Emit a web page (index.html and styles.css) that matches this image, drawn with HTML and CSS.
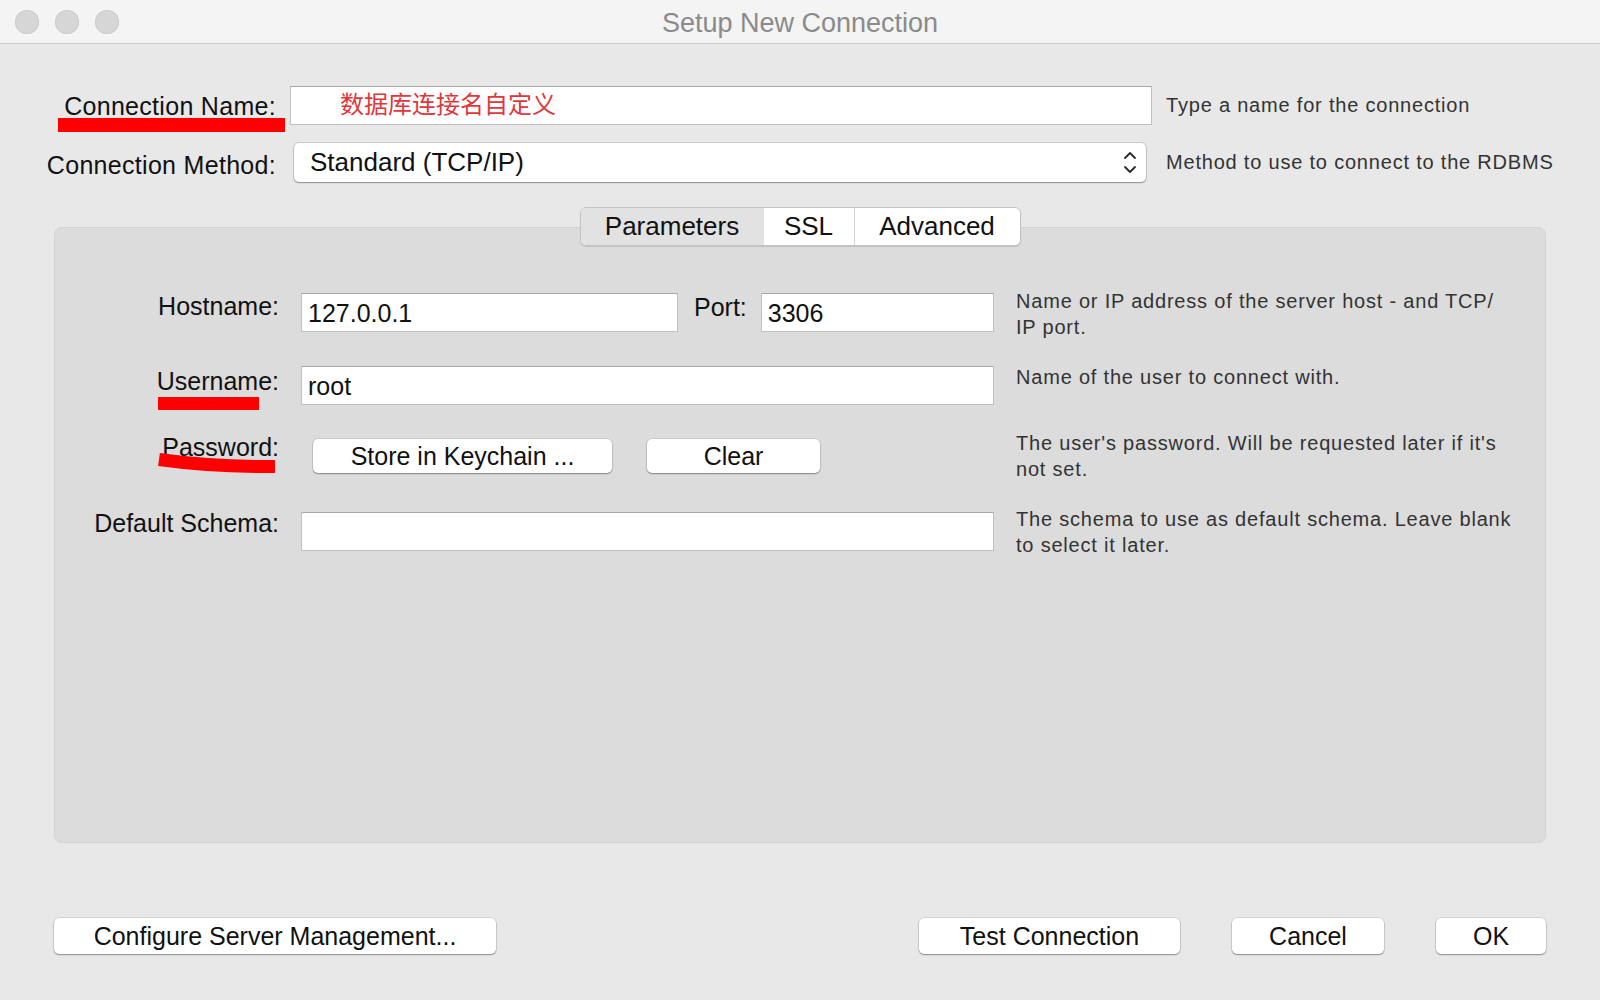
FILE: index.html
```html
<!DOCTYPE html>
<html lang="en">
<head>
<meta charset="utf-8">
<title>Setup New Connection</title>
<link rel="stylesheet" href="styles.css">
</head>
<body>
<div class="window">
  <header class="titlebar">
    <div class="lights"><span class="light"></span><span class="light"></span><span class="light"></span></div>
    <div class="title">Setup New Connection</div>
    <div></div>
  </header>

  <section class="top-form">
    <div class="top-label"><span class="mark-wrap">Connection Name:<span class="mark mark-conn"></span></span></div>
    <div class="input name-input"><span class="cn">数据库连接名自定义</span></div>
    <div class="top-hint">Type a name for the connection</div>

    <div class="top-label method-label">Connection Method:</div>
    <div class="select">
      <span>Standard (TCP/IP)</span>
      <svg class="stepper" width="14" height="25" viewBox="0 0 14 25"><path d="M2 8 L7 3 L12 8 M2 17 L7 22 L12 17" fill="none" stroke="#2a2a2a" stroke-width="1.8" stroke-linecap="round" stroke-linejoin="round"/></svg>
    </div>
    <div class="top-hint">Method to use to connect to the RDBMS</div>
  </section>

  <section class="group">
    <div class="tabs">
      <div class="tab tab-params active">Parameters</div>
      <div class="tab tab-ssl">SSL</div>
      <div class="tab tab-adv">Advanced</div>
    </div>
    <div class="panel">
      <div class="form-grid">
        <div class="f-label">Hostname:</div>
        <div class="host-row">
          <div class="input host-input">127.0.0.1</div>
          <div class="f-label port-label">Port:</div>
          <div class="input port-input">3306</div>
        </div>
        <div class="f-hint">Name or IP address of the server host - and TCP/<br>IP port.</div>

        <div class="f-label user-label"><span class="mark-wrap">Username:<span class="mark mark-user"></span></span></div>
        <div class="input">root</div>
        <div class="f-hint user-hint">Name of the user to connect with.</div>

        <div class="f-label pw-label"><span class="mark-wrap">Password:<svg class="swoosh" width="122" height="26" viewBox="0 0 122 26"><path d="M3 9.5 Q57 17 119 16.5" fill="none" stroke="#ff0000" stroke-width="13"/></svg></span></div>
        <div class="pw-buttons">
          <div class="btn btn-store">Store in Keychain ...</div>
          <div class="btn btn-clear">Clear</div>
        </div>
        <div class="f-hint pw-hint">The user's password. Will be requested later if it's<br>not set.</div>

        <div class="f-label schema-label">Default Schema:</div>
        <div class="input"></div>
        <div class="f-hint schema-hint">The schema to use as default schema. Leave blank<br>to select it later.</div>
      </div>
    </div>
  </section>

  <footer class="footer">
    <div class="btn btn-foot btn-config">Configure Server Management...</div>
    <div class="btn btn-foot btn-test">Test Connection</div>
    <div class="btn btn-foot btn-cancel">Cancel</div>
    <div class="btn btn-foot btn-ok">OK</div>
  </footer>
</div>
</body>
</html>
```

FILE: styles.css
```css
html, body {
  margin: 0;
  padding: 0;
}

body {
  background: #e8e8e8;
  font-family: "Liberation Sans", Arial, "Noto Sans CJK SC", sans-serif;
  color: #111;
}

.window {
  width: 1600px;
  height: 1000px;
  display: flex;
  flex-direction: column;
  background: #e8e8e8;
  overflow: hidden;
}

/* Title bar */
.titlebar {
  height: 43px;
  border-bottom: 1px solid #c8c8c8;
  background: #f4f4f4;
  display: grid;
  grid-template-columns: 1fr auto 1fr;
  align-items: center;
}

.lights {
  display: flex;
  gap: 16px;
  padding-left: 15px;
}

.light {
  width: 24px;
  height: 24px;
  border-radius: 50%;
  background: #d6d6d6;
  box-shadow: inset 0 0 0 1px #cdcdcd;
}

.title {
  font-size: 27px;
  color: #8a8a8a;
  padding-top: 3px;
}

/* Top form */
.top-form {
  display: grid;
  grid-template-columns: 276px 862px 1fr;
  grid-auto-rows: 39px;
  column-gap: 14px;
  row-gap: 18px;
  padding-top: 42px;
  align-items: center;
}

.top-label {
  text-align: right;
  font-size: 25px;
  line-height: 30px;
  letter-spacing: 0.3px;
  color: #111;
}

.method-label {
  padding-top: 4px;
}

.mark-wrap {
  position: relative;
  display: inline-block;
}

.mark {
  position: absolute;
  background: #ff0000;
}

.mark-conn {
  left: -6px;
  right: -9px;
  top: 27px;
  height: 14px;
}

.mark-user {
  left: 1px;
  width: 101px;
  top: 30px;
  height: 13px;
}

.swoosh {
  position: absolute;
  left: -6px;
  top: 17px;
}

.top-hint {
  font-size: 20px;
  letter-spacing: 0.8px;
  color: #333;
}

.input {
  box-sizing: border-box;
  height: 39px;
  background: #fff;
  border: 1px solid #c0c0c0;
  border-top-color: #a8a8a8;
  font-size: 25px;
  padding: 2px 6px 0;
  display: flex;
  align-items: center;
  color: #111;
}

.name-input {
  padding: 0 0 6px 49px;
}

.cn {
  font-family: "Noto Sans CJK SC", sans-serif;
  font-size: 24px;
  line-height: 30px;
  color: #e0363c;
}

.select {
  box-sizing: border-box;
  height: 39px;
  margin: 0 6px 0 4px;
  background: #fff;
  border-radius: 5px;
  box-shadow: 0 0 0 1px rgba(0, 0, 0, 0.12), 0 1px 1.5px rgba(0, 0, 0, 0.3);
  display: flex;
  align-items: center;
  justify-content: space-between;
  padding: 0 9px 0 16px;
  font-size: 26px;
  color: #111;
}

.stepper {
  display: block;
}

/* Group with tabs */
.group {
  margin: 25px 54px 0;
  display: flex;
  flex-direction: column;
  align-items: center;
}

.tabs {
  display: flex;
  height: 39px;
  box-sizing: border-box;
  border: 1px solid #c3c3c3;
  border-radius: 6px;
  background: #fff;
  overflow: hidden;
  position: relative;
  z-index: 1;
  box-shadow: 0 1px 1px rgba(0, 0, 0, 0.12);
}

.tab {
  box-sizing: border-box;
  font-size: 26px;
  line-height: 37px;
  text-align: center;
  color: #111;
}

.tab.active {
  background: #e2e2e2;
}

.tab-params {
  width: 183px;
}

.tab-ssl {
  width: 91px;
  border-right: 1px solid #d6d6d6;
}

.tab-adv {
  width: 165px;
}

.panel {
  align-self: stretch;
  margin-top: -19px;
  height: 616px;
  box-sizing: border-box;
  background: #dcdcdc;
  border: 1px solid #d3d3d3;
  border-radius: 8px;
  padding-top: 65px;
}

.form-grid {
  display: grid;
  grid-template-columns: 224px 693px 1fr;
  grid-auto-rows: 39px;
  column-gap: 22px;
  row-gap: 34px;
}

.f-label {
  text-align: right;
  font-size: 25px;
  line-height: 28px;
  margin-top: -1px;
  align-self: start;
  color: #111;
}

.user-label {
  margin-top: 1px;
}

.pw-label {
  margin-top: -6px;
}

.schema-label {
  margin-top: -3px;
}

.f-hint {
  font-size: 20px;
  letter-spacing: 0.8px;
  line-height: 26px;
  color: #333;
  margin-top: -5px;
  align-self: start;
}

.user-hint {
  margin-top: -2px;
}

.pw-hint {
  margin-top: -9px;
}

.schema-hint {
  margin-top: -6px;
}

.host-row {
  display: flex;
  align-items: flex-start;
}

.host-input {
  width: 377px;
}

.port-label {
  margin: 0 14px 0 16px;
}

.port-input {
  flex: 1;
}

.pw-buttons {
  display: flex;
  gap: 35px;
  padding-left: 12px;
  align-self: start;
}

.btn {
  box-sizing: border-box;
  background: #fff;
  border-radius: 5px;
  box-shadow: 0 0 0 0.5px rgba(0, 0, 0, 0.15), 0 1px 1.5px rgba(0, 0, 0, 0.35);
  font-size: 25px;
  color: #111;
  display: flex;
  align-items: center;
  justify-content: center;
  height: 34px;
}

.btn-store {
  width: 299px;
}

.btn-clear {
  width: 173px;
}

/* Footer */
.footer {
  display: flex;
  gap: 52px;
  margin-top: 75px;
  padding: 0 54px;
}

.btn-foot {
  height: 36px;
}

.btn-config {
  width: 442px;
  margin-right: auto;
}

.btn-test {
  width: 261px;
}

.btn-cancel {
  width: 152px;
}

.btn-ok {
  width: 110px;
}
```
